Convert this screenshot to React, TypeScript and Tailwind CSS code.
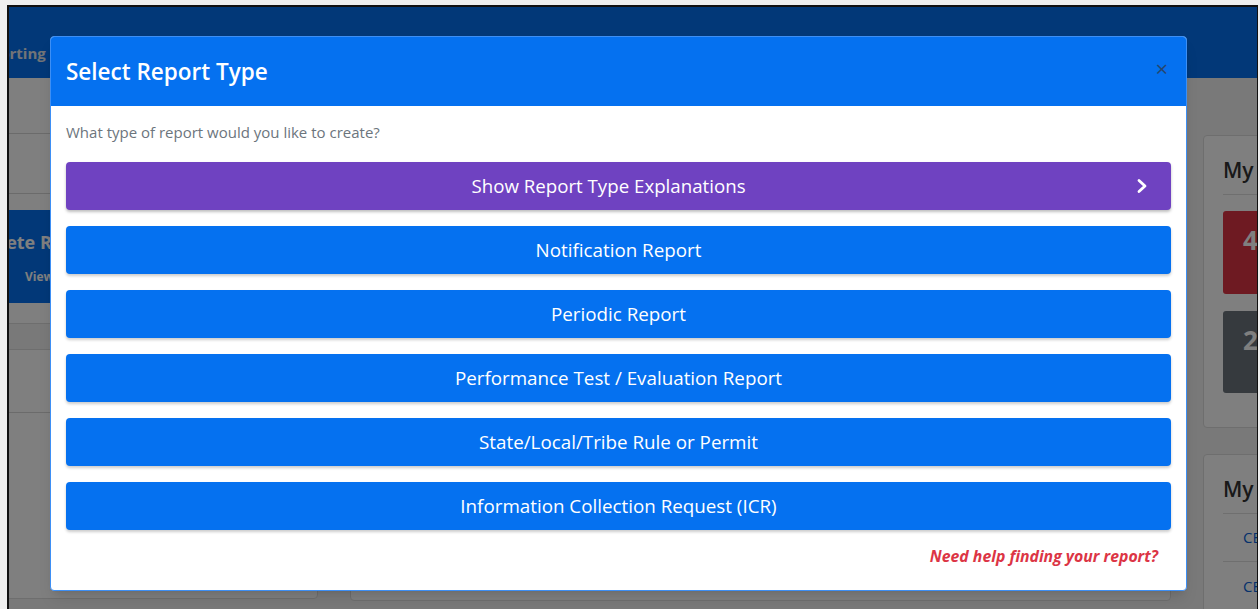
const reportTypes = [
  "Notification Report",
  "Periodic Report",
  "Performance Test / Evaluation Report",
  "State/Local/Tribe Rule or Permit",
  "Information Collection Request (ICR)",
];

const SelectReportTypeModal = () => (
  <div className="absolute left-[50px] top-[36px] w-[1137px] h-[555px] flex flex-col rounded-[4px] border border-[#3d8ff5] bg-white shadow-lg font-['Open_Sans',sans-serif]">
    <div className="h-[69px] shrink-0 flex items-center justify-between bg-[#0571f0] rounded-t-[3px] pl-[15px] pr-[18px]">
      <h2 className="text-[22.5px] font-semibold text-white leading-none pt-[2px]">Select Report Type</h2>
      <button type="button" className="text-[22px] leading-none text-[#25466e] pb-[8px]">×</button>
    </div>
    <div className="flex-1 px-[15px] pt-[16px]">
      <p className="text-[15px] leading-5 text-[#6c757d]">What type of report would you like to create?</p>
      <div className="mt-[20px] flex flex-col gap-[16px]">
        <button
          type="button"
          className="h-[48px] w-full flex items-center rounded-[4px] bg-[#6f42c1] pl-[15px] pr-[23px] text-white shadow-[0_2px_3px_rgba(0,0,0,0.25)]"
        >
          <span className="flex-1 text-center text-[18.7px]">Show Report Type Explanations</span>
          <svg width="12" height="16" viewBox="0 0 12 16" fill="none" stroke="currentColor" strokeWidth="2.8" strokeLinecap="round" strokeLinejoin="round">
            <path d="M3 2.5 9 8l-6 5.5" />
          </svg>
        </button>
        {reportTypes.map((type) => (
          <button
            key={type}
            type="button"
            className="h-[48px] w-full rounded-[4px] bg-[#0571f0] text-[18.8px] text-white shadow-[0_2px_3px_rgba(0,0,0,0.2)]"
          >
            {type}
          </button>
        ))}
      </div>
      <div className="mt-[15px] flex justify-end pr-[13px]">
        <a className="text-[15.8px] font-bold italic text-[#dc3545]">Need help finding your report?</a>
      </div>
    </div>
  </div>
);

export default function App() {
  return (
    <div className="relative w-[1260px] h-[609px] overflow-hidden bg-[#efefef] pt-[5px] pl-[7px]">
      <div className="relative w-[1251px] h-[700px] overflow-hidden border-l-2 border-t-2 border-r border-[#111] bg-[#f3f3f3] font-['Open_Sans',sans-serif]">
        <header className="h-[71px] bg-[#0571f0] flex items-center pt-[22px]">
          <nav className="-ml-[37px] flex gap-6 text-[15px] font-bold text-[#e4e8ee]">
            <span>Reporting</span>
          </nav>
        </header>

        <div className="flex gap-[32px]">
          {/* left column */}
          <div className="-ml-[80px] w-[389px] shrink-0 flex flex-col gap-[25px]">
            <div className="rounded-b-[4px] border-x border-b border-[#dcdcdc] bg-white">
              <div className="h-[56px] border-b border-[#d6d6d6]" />
              <div className="h-[60px] border-b border-[#d6d6d6]" />
              <div className="p-[16px] pb-[20px]">
                <div className="h-[93px] rounded-[3px] bg-[#0571f0] pl-[3px] pt-[20px]">
                  <div className="text-[18px] font-bold text-white leading-6">Complete Reports</div>
                  <div className="mt-[14px] pl-[76px] text-[12px] font-bold text-white">View All</div>
                </div>
              </div>
            </div>
            <div className="h-[250px] rounded-[4px] border border-[#dcdcdc] bg-white">
              <div className="h-[63px] border-b border-[#d6d6d6]" />
            </div>
          </div>

          {/* main column */}
          <div className="w-[821px] shrink-0 pt-[16px]">
            <div className="h-[507px] rounded-[4px] border border-[#dcdcdc] bg-white" />
          </div>

          {/* right column */}
          <div className="w-[300px] shrink-0 flex flex-col gap-[26px] pt-[57px]">
            <div className="h-[293px] rounded-[4px] border border-[#dcdcdc] bg-white px-[19px]">
              <div className="h-[59px] flex items-end pb-[8px] border-b border-[#dedede] text-[21px] font-semibold text-[#333]">My Reports</div>
              <div className="mt-[16px] h-[83px] rounded-[3px] bg-[#dc3545] pl-[20px] pt-[10px] text-[26px] font-bold text-white">4</div>
              <div className="mt-[17px] h-[82px] rounded-[3px] bg-[#6c757d] pl-[20px] pt-[10px] text-[26px] font-bold text-white">2</div>
            </div>
            <div className="h-[200px] rounded-[4px] border border-[#dcdcdc] bg-white px-[19px]">
              <div className="h-[59px] flex items-end pb-[8px] border-b border-[#dedede] text-[21px] font-semibold text-[#333]">My Submissions</div>
              <div className="h-[48px] flex items-center pl-[20px] border-b border-[#dedede] text-[15px] text-[#0a63d8]">CEDRI-1001</div>
              <div className="h-[48px] flex items-center pl-[20px] text-[15px] text-[#0a63d8]">CEDRI-1002</div>
            </div>
          </div>
        </div>

        <div className="absolute inset-0 bg-black/50" />
      </div>

      <SelectReportTypeModal />
    </div>
  );
}
